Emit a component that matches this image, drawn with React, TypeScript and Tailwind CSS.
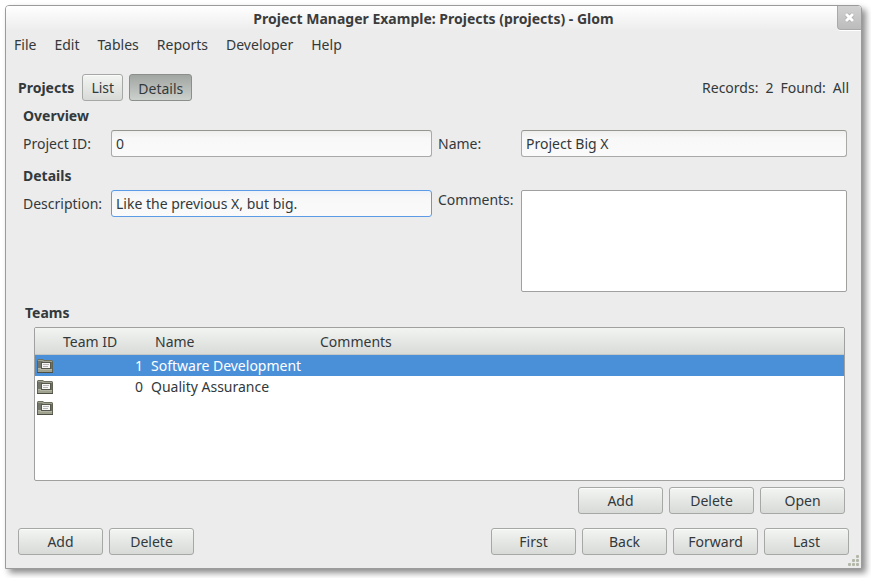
import type { ReactNode } from "react";

const menus = ["File", "Edit", "Tables", "Reports", "Developer", "Help"];

const teams = [
  { id: "1", name: "Software Development", comments: "", selected: true },
  { id: "0", name: "Quality Assurance", comments: "", selected: false },
  { id: "", name: "", comments: "", selected: false },
];

const inputClass =
  "h-[27px] w-full min-w-0 rounded-[3px] border px-1 outline-none";
const plainInput =
  "border-[#a9aaa7] border-t-[#95968f] bg-linear-to-b from-[#efefee] via-[#f8f8f8] via-30% to-[#fafafa]";
const focusInput =
  "border-[#5c9ce6] bg-linear-to-b from-[#eef2f7] via-[#f8f8f8] via-30% to-[#fafafa]";

function Button({ children }: { children: ReactNode }) {
  return (
    <button
      type="button"
      className="h-[27px] w-[85px] rounded-[3px] border border-[#a5a8a5] bg-linear-to-b from-[#f3f5f3] to-[#d7dad7] text-center shadow-[inset_0_1px_0_#fafbfa]"
    >
      {children}
    </button>
  );
}

function FolderIcon() {
  return (
    <svg width="16" height="14" viewBox="0 0 16 14" className="block" aria-hidden="true">
      <path d="M0 13V1L1 0H6L7 1H15L16 2V13Z" fill="#6d705f" />
      <path d="M1 1H6L7 2H15V3H6L5 2H1Z" fill="#9fa190" />
      <path d="M1 2H5V9H1Z" fill="#73766a" />
      <path d="M4 3H14V10H4Z" fill="#55584a" />
      <path d="M5 4H13V9H5Z" fill="#f6f6f4" />
      <path d="M6 5H12V6H6ZM6 7H11V8H6Z" fill="#b4b4b4" />
      <path d="M1 9H4V10H15V13H1Z" fill="#a0a28f" />
      <path d="M1 9H4V10H15V11H3V10H1Z" fill="#b4b6a6" />
      <path d="M0 13H16V14H0Z" fill="#4d5042" />
      <path d="M0 2H1V13H0ZM15 3H16V13H15Z" fill="#5f6254" />
    </svg>
  );
}

function ResizeGrip() {
  const dots = [
    [8, 0],
    [4, 4],
    [8, 4],
    [0, 8],
    [4, 8],
    [8, 8],
  ];
  return (
    <svg width="11" height="11" viewBox="0 0 11 11" className="absolute right-0.5 bottom-0.5" aria-hidden="true">
      {dots.map(([x, y]) => (
        <rect key={`${x}-${y}`} x={x} y={y} width="3" height="3" rx="1" fill="#b3b7a8" />
      ))}
    </svg>
  );
}

export default function App() {
  return (
    <div className="bg-white pt-[5px] pr-[9px] pb-[9px] pl-[5px] font-['Noto_Sans',sans-serif] text-[14px] leading-5 text-[#33393b]">
      <div className="relative rounded-t-[4px] border border-[#9b9b9b] bg-[#ececec] shadow-[4px_4px_6px_rgba(0,0,0,0.45)]">
        <header className="flex h-[25px] items-start rounded-t-[3px] bg-linear-to-b from-white to-[#ececec]">
          <h1 className="flex-1 pt-[3px] pl-6 text-center font-bold text-[#3c3c3c]">
            Project Manager Example: Projects (projects) - Glom
          </h1>
          <button
            type="button"
            aria-label="Close"
            className="flex h-[24px] w-[24px] items-center justify-center rounded-tr-[3px] rounded-bl-[4px] border-b border-l border-[#a9a9a9] bg-linear-to-b from-[#d2d2d2] to-[#bcbcbc] shadow-[0_1px_0_#fff]"
          >
            <svg width="11" height="11" viewBox="0 0 11 11" aria-hidden="true">
              <path d="M2 2L9 9M9 2L2 9" stroke="#a3a3a3" strokeWidth="4" />
              <path d="M2 2L9 9M9 2L2 9" stroke="#fff" strokeWidth="3" />
            </svg>
          </button>
        </header>

        <nav className="flex h-[28px] items-center gap-[18px] px-2">
          {menus.map((menu) => (
            <button key={menu} type="button">
              {menu}
            </button>
          ))}
        </nav>

        <main className="px-3 pt-[15px] pb-[13px]">
          <div className="flex items-center">
            <h2 className="mr-2 font-bold">Projects</h2>
            <button
              type="button"
              className="mr-1.5 h-[27px] w-[41px] rounded-[3px] border border-[#a5a8a5] bg-linear-to-b from-[#f3f5f3] to-[#d7dad7] shadow-[inset_0_1px_0_#fafbfa]"
            >
              List
            </button>
            <button
              type="button"
              aria-pressed="true"
              className="h-[27px] w-[63px] rounded-[3px] border border-[#8b8f8b] bg-linear-to-b from-[#a2a6a2] to-[#cdd1cd] pt-0.5"
            >
              Details
            </button>
            <p className="ml-auto flex gap-[7px]">
              <span>Records:</span>
              <span>2</span>
              <span>Found:</span>
              <span>All</span>
            </p>
          </div>

          <section className="pt-[5px] pr-0.5 pl-[5px]">
            <h3 className="mb-1 font-bold">Overview</h3>
            <div className="grid grid-cols-[82px_321fr_77px_326fr] items-center gap-x-1.5">
              <label htmlFor="project-id">Project ID:</label>
              <input id="project-id" defaultValue="0" className={`${inputClass} ${plainInput}`} />
              <label htmlFor="project-name">Name:</label>
              <input id="project-name" defaultValue="Project Big X" className={`${inputClass} ${plainInput}`} />
            </div>
          </section>

          <section className="pt-[9px] pr-0.5 pl-[5px]">
            <h3 className="mb-1 font-bold">Details</h3>
            <div className="grid grid-cols-[82px_321fr_77px_326fr] items-start gap-x-1.5">
              <label htmlFor="description" className="pt-1">
                Description:
              </label>
              <input
                id="description"
                defaultValue="Like the previous X, but big."
                className={`${inputClass} ${focusInput}`}
              />
              <label htmlFor="comments">Comments:</label>
              <textarea
                id="comments"
                className="block h-[102px] w-full resize-none rounded-[2px] border border-[#a0a09e] bg-white px-1 outline-none"
              />
            </div>
          </section>

          <section className="pt-[11px] pr-1 pl-[7px]">
            <h3 className="mb-1 font-bold">Teams</h3>
            <div className="ml-[9px] h-[154px] overflow-hidden rounded-[2px] border border-[#a0a09e] bg-white">
              <table className="w-full table-fixed border-collapse">
                <colgroup>
                  <col className="w-[22px]" />
                  <col className="w-[90px]" />
                  <col className="w-[165px]" />
                  <col />
                </colgroup>
                <thead>
                  <tr className="h-[27px] bg-linear-to-b from-[#f2f4f2] to-[#d7dad7] text-left shadow-[inset_0_-1px_0_#c4c8c4]">
                    <th className="p-0" aria-label="Open" />
                    <th className="p-0 pl-1.5 font-normal">Team ID</th>
                    <th className="p-0 pl-2 font-normal">Name</th>
                    <th className="p-0 pl-2 font-normal">Comments</th>
                  </tr>
                </thead>
                <tbody>
                  {teams.map((team, index) => (
                    <tr key={index} className={`h-[21px] ${team.selected ? "bg-[#4a90d9] text-white" : ""}`}>
                      <td className="p-0 pt-px pl-0.5">
                        <FolderIcon />
                      </td>
                      <td className="p-0 pt-px pr-1 text-right">{team.id}</td>
                      <td className="p-0 pt-px pl-1 whitespace-nowrap">{team.name}</td>
                      <td className="p-0 pt-px pl-1">{team.comments}</td>
                    </tr>
                  ))}
                </tbody>
              </table>
            </div>
            <div className="mt-1.5 flex justify-end gap-1.5">
              <Button>Add</Button>
              <Button>Delete</Button>
              <Button>Open</Button>
            </div>
          </section>

          <footer className="mt-3.5 flex gap-1.5">
            <Button>Add</Button>
            <Button>Delete</Button>
            <div className="ml-auto flex gap-1.5">
              <Button>First</Button>
              <Button>Back</Button>
              <Button>Forward</Button>
              <Button>Last</Button>
            </div>
          </footer>
        </main>
        <ResizeGrip />
      </div>
    </div>
  );
}
